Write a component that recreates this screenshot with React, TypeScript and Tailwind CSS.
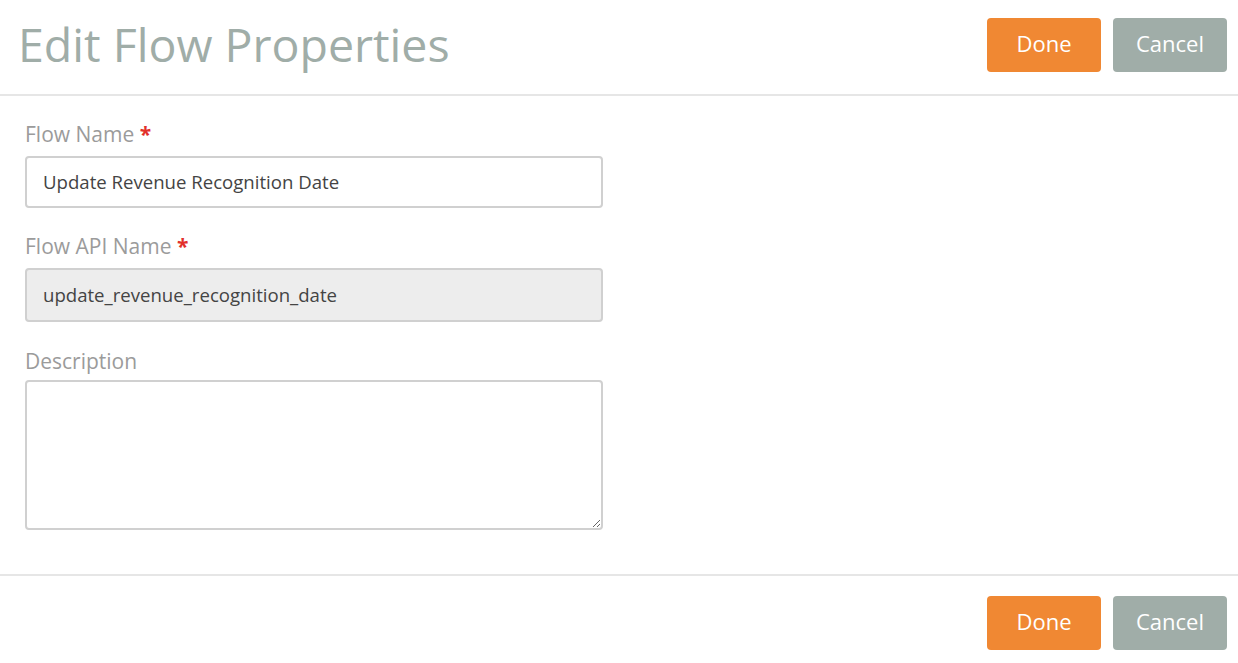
import React from "react";

function Buttons() {
  return (
    <div className="flex gap-[12px]">
      <button className="w-[114px] h-[54px] pb-[3px] rounded-[4px] bg-[#f08833] text-white text-[22px]">Done</button>
      <button className="w-[114px] h-[54px] pb-[3px] rounded-[4px] bg-[#a0ada8] text-white text-[22px]">Cancel</button>
    </div>
  );
}

export default function App() {
  return (
    <div className="w-[1238px] h-[663px] bg-white font-['Open_Sans',sans-serif]">
      <div className="h-[96px] flex justify-between items-start border-b-2 border-[#e6e6e6] pl-[18px] pr-[11px]">
        <h1 className="text-[46.5px] leading-[60px] mt-[14px] text-[#a0ada8]">Edit Flow Properties</h1>
        <div className="mt-[18px]">
          <Buttons />
        </div>
      </div>
      <div className="pl-[25px] pt-[24px] h-[480px] border-b-2 border-[#e6e6e6]">
        <div className="text-[21px] leading-[28px] text-[#9b9b9b]">
          Flow Name <span className="text-[#e2302b] font-bold">*</span>
        </div>
        <div className="mt-[8px] w-[578px] h-[52px] border-2 border-[#d0d0d0] rounded-[4px] flex items-center pl-[16px] text-[18.6px] text-[#444444]">
          Update Revenue Recognition Date
        </div>
        <div className="mt-[24px] text-[21px] leading-[28px] text-[#9b9b9b]">
          Flow API Name <span className="text-[#e2302b] font-bold">*</span>
        </div>
        <div className="mt-[8px] w-[578px] h-[54px] border-2 border-[#d0d0d0] rounded-[4px] bg-[#ededed] flex items-center pl-[16px] text-[18.6px] text-[#444444]">
          update_revenue_recognition_date
        </div>
        <div className="mt-[25px] text-[21px] leading-[28px] text-[#9b9b9b]">Description</div>
        <textarea className="block mt-[5px] w-[578px] h-[150px] border-2 border-[#d0d0d0] rounded-[4px] resize" />
      </div>
      <div className="flex justify-end pr-[11px] pt-[20px]">
        <Buttons />
      </div>
    </div>
  );
}
